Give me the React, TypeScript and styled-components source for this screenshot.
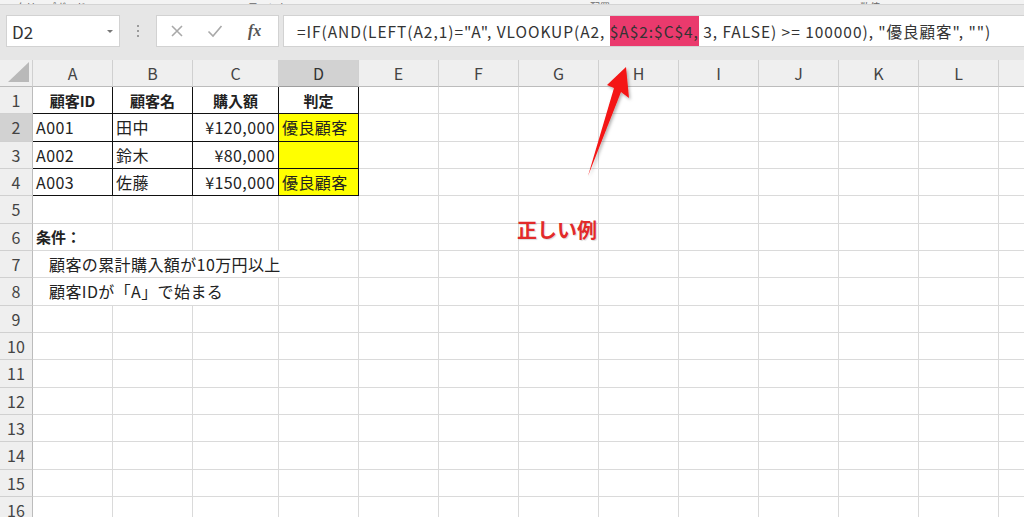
import React from "react";
import styled, { createGlobalStyle } from "styled-components";

const GlobalStyle = createGlobalStyle`
  html, body {
    margin: 0;
    padding: 0;
    background: #ffffff;
    overflow: hidden;
  }
  * { box-sizing: border-box; }
`;

const FONT = `"Noto Sans CJK JP", "Noto Sans", sans-serif`;
const COL_WIDTHS = [80, 80, 86, 80, 80, 80, 80, 80, 80, 80, 80, 80, 80];
const LETTERS = ["A", "B", "C", "D", "E", "F", "G", "H", "I", "J", "K", "L", "M"];
const TEMPLATE = `33px ${COL_WIDTHS.map((w) => `${w}px`).join(" ")}`;
const ROW_H = 27.33;

const Window = styled.div`
  position: relative;
  width: 1024px;
  height: 517px;
  overflow: hidden;
  font-family: ${FONT};
  background: #fff;
`;

const RibbonStrip = styled.div`
  height: 5px;
  background: #f3f3f3;
  border-bottom: 1px solid #d4d4d4;
  overflow: hidden;
  display: flex;
  align-items: flex-end;
`;

const GroupLabel = styled.span<{ $left: number }>`
  flex: none;
  margin-left: ${({ $left }) => $left}px;
  font-size: 10px;
  line-height: 13px;
  height: 13px;
  margin-bottom: -9px;
  color: #666;
  white-space: nowrap;
`;

const FormulaBar = styled.div`
  height: 55px;
  background: #e6e6e6;
  display: flex;
  align-items: flex-start;
  padding: 10px 0 0 6px;
`;

const NameBox = styled.div`
  width: 114px;
  height: 32px;
  background: #fff;
  border: 1px solid #d2d2d2;
  display: flex;
  align-items: center;
  justify-content: space-between;
  padding: 0 6px 0 5px;
  font-size: 17px;
  color: #333;
`;

const Caret = styled.span`
  width: 0;
  height: 0;
  border-left: 3px solid transparent;
  border-right: 3px solid transparent;
  border-top: 3px solid #777;
`;

const Grip = styled.div`
  width: 36px;
  height: 32px;
  display: flex;
  flex-direction: column;
  align-items: center;
  justify-content: center;
  gap: 3px;
  & > i {
    width: 2px;
    height: 2px;
    background: #9b9b9b;
  }
`;

const ButtonBox = styled.div`
  width: 123px;
  height: 32px;
  background: #fff;
  border: 1px solid #d2d2d2;
  display: flex;
  align-items: center;
  padding-left: 13px;
  gap: 23px;
  color: #a9a9a9;
`;

const FxLabel = styled.span`
  font-family: "Liberation Serif", serif;
  font-style: italic;
  font-weight: bold;
  font-size: 16px;
  color: #555;
  margin-left: 2px;
`;

const FormulaBox = styled.div`
  flex: 1;
  margin-left: 4px;
  height: 32px;
  background: #fff;
  border: 1px solid #d2d2d2;
  border-right: none;
  display: flex;
  align-items: stretch;
  padding-left: 13px;
  font-size: 15.5px;
  letter-spacing: 0.95px;
  color: #333;
  white-space: nowrap;
  overflow: hidden;
`;

const FormulaPart = styled.span<{ $hl?: boolean }>`
  display: flex;
  align-items: center;
  background: ${({ $hl }) => ($hl ? "#ea3a6d" : "transparent")};
`;

const Sheet = styled.div`
  display: flex;
  flex-direction: column;
`;

const HeaderRow = styled.div`
  display: grid;
  grid-template-columns: ${TEMPLATE};
  height: 27px;
`;

const Corner = styled.div`
  background: #efefef;
  border-right: 1px solid #d0d0d0;
  border-bottom: 1px solid #bcbcbc;
  display: flex;
  align-items: flex-end;
  justify-content: flex-end;
  padding: 0 3px 4px 0;
`;

const ColHeader = styled.div<{ $sel?: boolean }>`
  background: ${({ $sel }) => ($sel ? "#d2d2d2" : "#efefef")};
  border-right: 1px solid #d0d0d0;
  border-bottom: 1px solid ${({ $sel }) => ($sel ? "#9e9e9e" : "#bcbcbc")};
  display: flex;
  align-items: center;
  justify-content: center;
  font-size: 16px;
  color: ${({ $sel }) => ($sel ? "#333" : "#444")};
`;

const Row = styled.div`
  display: grid;
  grid-template-columns: ${TEMPLATE};
  height: ${ROW_H}px;
`;

const RowHeader = styled.div<{ $sel?: boolean }>`
  background: ${({ $sel }) => ($sel ? "#d2d2d2" : "#efefef")};
  border-right: 1px solid #bcbcbc;
  border-bottom: 1px solid #d0d0d0;
  display: flex;
  align-items: center;
  justify-content: center;
  font-size: 16px;
  color: #444;
`;

const Cell = styled.div<{
  $align?: "left" | "center" | "right";
  $bold?: boolean;
  $fill?: string;
  $boxed?: boolean;
  $span?: number;
  $indent?: number;
}>`
  grid-column: span ${({ $span }) => $span ?? 1};
  background: ${({ $fill }) => $fill ?? "#fff"};
  border-right: 1px solid ${({ $boxed }) => ($boxed ? "#111" : "#dadada")};
  border-bottom: 1px solid ${({ $boxed }) => ($boxed ? "#111" : "#dadada")};
  display: flex;
  align-items: center;
  justify-content: ${({ $align }) =>
    $align === "center" ? "center" : $align === "right" ? "flex-end" : "flex-start"};
  padding: 0 3px 0 ${({ $indent }) => 3 + ($indent ?? 0)}px;
  font-size: ${({ $bold }) => ($bold ? 15 : 16)}px;
  letter-spacing: ${({ $bold }) => ($bold ? 0 : 0.4)}px;
  font-weight: ${({ $bold }) => ($bold ? 700 : 400)};
  color: #222;
  white-space: nowrap;
  overflow: visible;
`;

const Annotation = styled.div`
  position: absolute;
  left: 517px;
  top: 215px;
  font-size: 20px;
  font-weight: 700;
  color: #e22a2a;
  text-shadow: 1px 1px 1px rgba(0, 0, 0, 0.15);
`;

const ArrowSvg = styled.svg`
  position: absolute;
  left: 0;
  top: 0;
  pointer-events: none;
`;

type CellDef = {
  text?: string;
  align?: "left" | "center" | "right";
  bold?: boolean;
  fill?: string;
  span?: number;
  indent?: number;
};

const YELLOW = "#ffff00";

const data: Record<number, Record<number, CellDef>> = {
  1: {
    0: { text: "顧客ID", align: "center", bold: true },
    1: { text: "顧客名", align: "center", bold: true },
    2: { text: "購入額", align: "center", bold: true },
    3: { text: "判定", align: "center", bold: true },
  },
  2: {
    0: { text: "A001" },
    1: { text: "田中" },
    2: { text: "¥120,000", align: "right" },
    3: { text: "優良顧客", fill: YELLOW },
  },
  3: {
    0: { text: "A002" },
    1: { text: "鈴木" },
    2: { text: "¥80,000", align: "right" },
    3: { fill: YELLOW },
  },
  4: {
    0: { text: "A003" },
    1: { text: "佐藤" },
    2: { text: "¥150,000", align: "right" },
    3: { text: "優良顧客", fill: YELLOW },
  },
  6: { 0: { text: "条件：", bold: true } },
  7: { 0: { text: "顧客の累計購入額が10万円以上", span: 4, indent: 13 } },
  8: { 0: { text: "顧客IDが「A」で始まる", span: 3, indent: 13 } },
};

function SheetRow({ r }: { r: number }) {
  const defs = data[r] ?? {};
  const cells: React.ReactNode[] = [];
  let c = 0;
  while (c < COL_WIDTHS.length) {
    const d = defs[c] ?? {};
    const span = d.span ?? 1;
    cells.push(
      <Cell
        key={c}
        $align={d.align}
        $bold={d.bold}
        $fill={d.fill}
        $span={span}
        $indent={d.indent}
        $boxed={r <= 4 && c <= 3}
      >
        {d.text}
      </Cell>
    );
    c += span;
  }
  return (
    <Row>
      <RowHeader $sel={r === 2}>{r}</RowHeader>
      {cells}
    </Row>
  );
}

export default function App() {
  const rows = Array.from({ length: 16 }, (_, i) => i + 1);
  return (
    <Window>
      <GlobalStyle />
      <RibbonStrip>
        <GroupLabel $left={16}>クリップボード</GroupLabel>
        <GroupLabel $left={162}>フォント</GroupLabel>
        <GroupLabel $left={302}>配置</GroupLabel>
        <GroupLabel $left={250}>数値</GroupLabel>
      </RibbonStrip>
      <FormulaBar>
        <NameBox>
          D2
          <Caret />
        </NameBox>
        <Grip>
          <i />
          <i />
          <i />
        </Grip>
        <ButtonBox>
          <svg width="14" height="14" viewBox="0 0 14 14">
            <path d="M2 2 L12 12 M12 2 L2 12" stroke="#a9a9a9" strokeWidth="1.6" fill="none" />
          </svg>
          <svg width="16" height="14" viewBox="0 0 16 14">
            <path d="M1.5 7.5 L6 12 L14.5 2" stroke="#a9a9a9" strokeWidth="1.6" fill="none" />
          </svg>
          <FxLabel>fx</FxLabel>
        </ButtonBox>
        <FormulaBox>
          <FormulaPart>=IF(AND(LEFT(A2,1)="A", VLOOKUP(A2,&nbsp;</FormulaPart>
          <FormulaPart $hl>$A$2:$C$4,</FormulaPart>
          <FormulaPart>&nbsp;3, FALSE) &gt;= 100000), "優良顧客", "")</FormulaPart>
        </FormulaBox>
      </FormulaBar>
      <Sheet>
        <HeaderRow>
          <Corner>
            <svg width="21" height="20" viewBox="0 0 21 20">
              <polygon points="21,0 21,20 0,20" fill="#b9b9b9" />
            </svg>
          </Corner>
          {LETTERS.map((l) => (
            <ColHeader key={l} $sel={l === "D"}>
              {l}
            </ColHeader>
          ))}
        </HeaderRow>
        {rows.map((r) => (
          <SheetRow key={r} r={r} />
        ))}
      </Sheet>
      <ArrowSvg width="1024" height="517" viewBox="0 0 1024 517">
        <defs>
          <filter id="shadow" x="-50%" y="-50%" width="200%" height="200%">
            <feDropShadow dx="1.5" dy="2" stdDeviation="1.5" floodColor="#000" floodOpacity="0.3" />
          </filter>
        </defs>
        <polygon
          points="626,67 629,98 621,92 588,176 614,88 607,85"
          fill="#f41414"
          filter="url(#shadow)"
        />
      </ArrowSvg>
      <Annotation>正しい例</Annotation>
    </Window>
  );
}
